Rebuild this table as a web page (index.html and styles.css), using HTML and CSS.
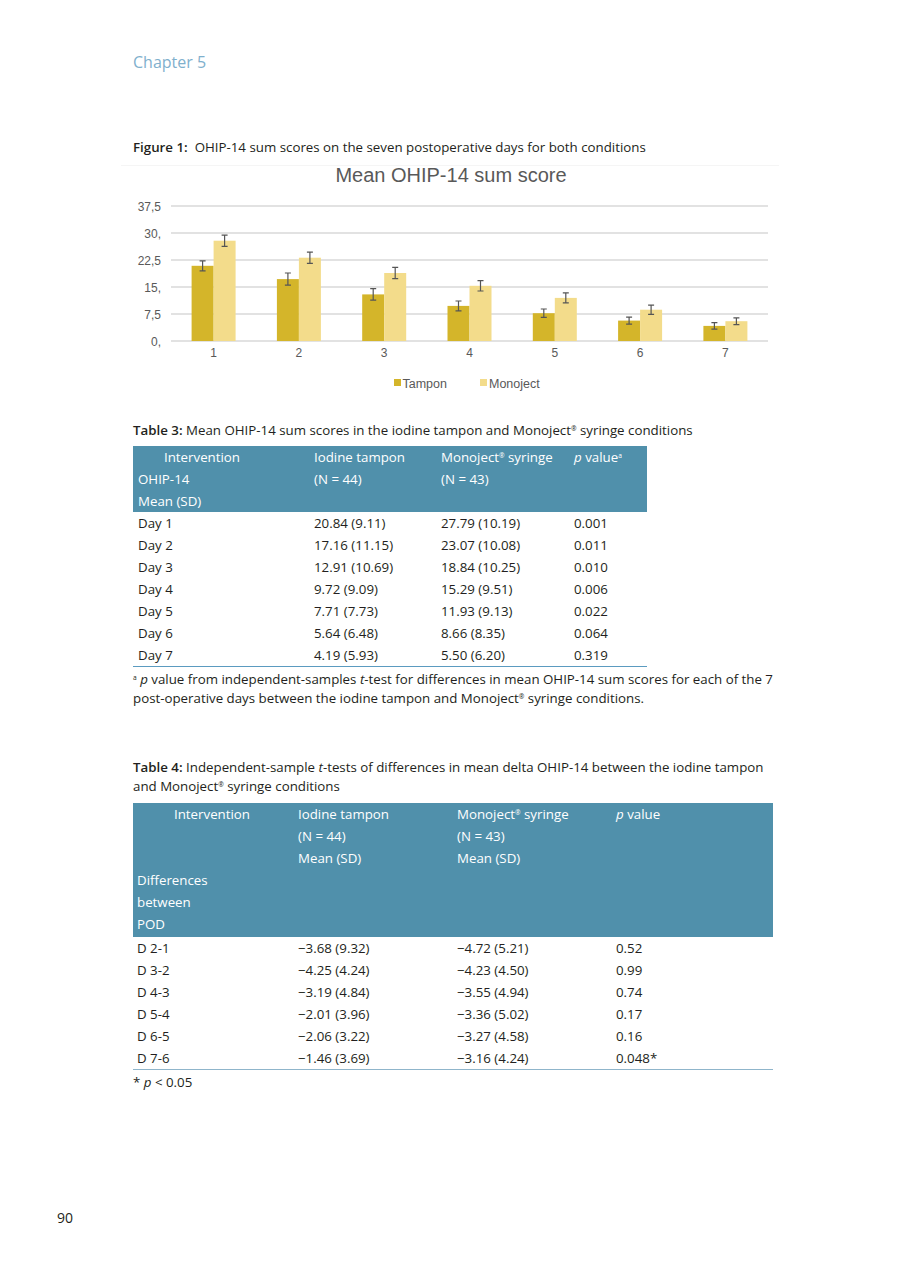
FILE: index.html
```html
<!DOCTYPE html>
<html>
<head>
<meta charset="utf-8">
<link rel="stylesheet" href="styles.css">
</head>
<body>
<div class="content">
  <div class="chapter">Chapter 5</div>
  <div class="fig-caption"><b>Figure 1:</b>&nbsp; OHIP-14 sum scores on the seven postoperative days for both conditions</div>
  <svg class="chart" width="660" height="238" viewBox="120 157 660 238" xmlns="http://www.w3.org/2000/svg">
    <line x1="121" y1="165.5" x2="779" y2="165.5" stroke="#f5f5f5" stroke-width="1"/>
    <text x="451" y="182" text-anchor="middle" class="c-title">Mean OHIP-14 sum score</text>
    <g stroke="#d9d9d9" stroke-width="1.5">
      <line x1="171" y1="206" x2="768" y2="206"/>
      <line x1="171" y1="233" x2="768" y2="233"/>
      <line x1="171" y1="260" x2="768" y2="260"/>
      <line x1="171" y1="287" x2="768" y2="287"/>
      <line x1="171" y1="314" x2="768" y2="314"/>
      <line x1="171" y1="341" x2="768" y2="341"/>
    </g>
    <g class="c-axis" text-anchor="end">
      <text x="161" y="210.5">37,5</text>
      <text x="161" y="237.5">30,</text>
      <text x="161" y="264.5">22,5</text>
      <text x="161" y="291.5">15,</text>
      <text x="161" y="318.5">7,5</text>
      <text x="161" y="345.5">0,</text>
    </g>
    <g fill="#d4b52a">
      <rect x="191.6" y="265.8" width="22" height="75.2"/>
      <rect x="276.9" y="279.1" width="22" height="61.9"/>
      <rect x="362.2" y="294.4" width="22" height="46.6"/>
      <rect x="447.5" y="305.9" width="22" height="35.1"/>
      <rect x="532.8" y="313.2" width="22" height="27.8"/>
      <rect x="618.1" y="320.6" width="22" height="20.4"/>
      <rect x="703.4" y="325.9" width="22" height="15.1"/>
    </g>
    <g fill="#f3dc8b">
      <rect x="213.6" y="240.7" width="22" height="100.3"/>
      <rect x="298.9" y="257.7" width="22" height="83.3"/>
      <rect x="384.2" y="273.0" width="22" height="68.0"/>
      <rect x="469.5" y="285.8" width="22" height="55.2"/>
      <rect x="554.8" y="297.9" width="22" height="43.1"/>
      <rect x="640.1" y="309.7" width="22" height="31.3"/>
      <rect x="725.4" y="321.2" width="22" height="19.8"/>
    </g>
    <g stroke="#555" stroke-width="1.2" fill="none">
      <path d="M202.6 260.8V270.8M199.6 260.8H205.6M199.6 270.8H205.6"/>
      <path d="M287.9 273.0V285.2M284.9 273.0H290.9M284.9 285.2H290.9"/>
      <path d="M373.2 288.6V300.2M370.2 288.6H376.2M370.2 300.2H376.2"/>
      <path d="M458.5 301.0V310.9M455.5 301.0H461.5M455.5 310.9H461.5"/>
      <path d="M543.8 309.0V317.4M540.8 309.0H546.8M540.8 317.4H546.8"/>
      <path d="M629.1 317.1V324.1M626.1 317.1H632.1M626.1 324.1H632.1"/>
      <path d="M714.4 322.7V329.1M711.4 322.7H717.4M711.4 329.1H717.4"/>
      <path d="M224.6 235.1V246.3M221.6 235.1H227.6M221.6 246.3H227.6"/>
      <path d="M309.9 252.2V263.3M306.9 252.2H312.9M306.9 263.3H312.9"/>
      <path d="M395.2 267.4V278.6M392.2 267.4H398.2M392.2 278.6H398.2"/>
      <path d="M480.5 280.6V291.0M477.5 280.6H483.5M477.5 291.0H483.5"/>
      <path d="M565.8 292.9V302.9M562.8 292.9H568.8M562.8 302.9H568.8"/>
      <path d="M651.1 305.1V314.3M648.1 305.1H654.1M648.1 314.3H654.1"/>
      <path d="M736.4 317.8V324.6M733.4 317.8H739.4M733.4 324.6H739.4"/>
    </g>
    <g class="c-axis" text-anchor="middle">
      <text x="213.6" y="357">1</text>
      <text x="298.9" y="357">2</text>
      <text x="384.2" y="357">3</text>
      <text x="469.5" y="357">4</text>
      <text x="554.8" y="357">5</text>
      <text x="640.1" y="357">6</text>
      <text x="725.4" y="357">7</text>
    </g>
    <rect x="394" y="379" width="7" height="7" fill="#d4b52a"/>
    <text x="402.5" y="387.5" class="c-legend">Tampon</text>
    <rect x="480" y="379" width="7" height="7" fill="#f3dc8b"/>
    <text x="489" y="387.5" class="c-legend">Monoject</text>
  </svg>

  <div class="tab-caption"><b>Table 3:</b> Mean OHIP-14 sum scores in the iodine tampon and Monoject<sup>®</sup> syringe conditions</div>
  <table class="tbl t3">
    <thead>
      <tr><th class="ind">Intervention</th><th>Iodine tampon</th><th>Monoject<sup>®</sup> syringe</th><th><i>p</i> value<sup>a</sup></th></tr>
      <tr><th>OHIP-14</th><th>(N = 44)</th><th>(N = 43)</th><th></th></tr>
      <tr><th>Mean (SD)</th><th></th><th></th><th></th></tr>
    </thead>
    <tbody>
      <tr><td>Day 1</td><td>20.84 (9.11)</td><td>27.79 (10.19)</td><td>0.001</td></tr>
      <tr><td>Day 2</td><td>17.16 (11.15)</td><td>23.07 (10.08)</td><td>0.011</td></tr>
      <tr><td>Day 3</td><td>12.91 (10.69)</td><td>18.84 (10.25)</td><td>0.010</td></tr>
      <tr><td>Day 4</td><td>9.72 (9.09)</td><td>15.29 (9.51)</td><td>0.006</td></tr>
      <tr><td>Day 5</td><td>7.71 (7.73)</td><td>11.93 (9.13)</td><td>0.022</td></tr>
      <tr><td>Day 6</td><td>5.64 (6.48)</td><td>8.66 (8.35)</td><td>0.064</td></tr>
      <tr><td>Day 7</td><td>4.19 (5.93)</td><td>5.50 (6.20)</td><td>0.319</td></tr>
    </tbody>
  </table>
  <p class="note n3"><sup>a</sup> <i>p</i> value from independent-samples <i>t</i>-test for differences in mean OHIP-14 sum scores for each of the 7 <span class="nw">post-operative</span> days between the iodine tampon and Monoject<sup>®</sup> syringe conditions.</p>

  <div class="tab-caption t4cap"><b>Table 4:</b> Independent-sample <i>t</i>-tests of differences in mean delta OHIP-14 between the iodine tampon and Monoject<sup>®</sup> syringe conditions</div>
  <table class="tbl t4">
    <thead>
      <tr><th class="ind">Intervention</th><th>Iodine tampon</th><th>Monoject<sup>®</sup> syringe</th><th><i>p</i> value</th></tr>
      <tr><th></th><th>(N = 44)</th><th>(N = 43)</th><th></th></tr>
      <tr><th></th><th>Mean (SD)</th><th>Mean (SD)</th><th></th></tr>
      <tr><th>Differences</th><th></th><th></th><th></th></tr>
      <tr><th>between</th><th></th><th></th><th></th></tr>
      <tr class="last"><th>POD</th><th></th><th></th><th></th></tr>
    </thead>
    <tbody>
      <tr><td>D 2-1</td><td>−3.68 (9.32)</td><td>−4.72 (5.21)</td><td>0.52</td></tr>
      <tr><td>D 3-2</td><td>−4.25 (4.24)</td><td>−4.23 (4.50)</td><td>0.99</td></tr>
      <tr><td>D 4-3</td><td>−3.19 (4.84)</td><td>−3.55 (4.94)</td><td>0.74</td></tr>
      <tr><td>D 5-4</td><td>−2.01 (3.96)</td><td>−3.36 (5.02)</td><td>0.17</td></tr>
      <tr><td>D 6-5</td><td>−2.06 (3.22)</td><td>−3.27 (4.58)</td><td>0.16</td></tr>
      <tr><td>D 7-6</td><td>−1.46 (3.69)</td><td>−3.16 (4.24)</td><td>0.048*</td></tr>
    </tbody>
  </table>
  <p class="note n4">* <i>p</i> &lt; 0.05</p>
</div>
<div class="folio">90</div>
</body>
</html>
```

FILE: styles.css
```css
html, body {
  margin: 0;
  padding: 0;
  background: #ffffff;
}
body {
  font-family: "Open Sans", "Noto Sans", sans-serif;
  font-size: 13.3px;
  color: #231f20;
  width: 905px;
  height: 1280px;
  overflow: hidden;
}
.content {
  margin-left: 133px;
  padding-top: 52px;
  width: 645px;
}
sup {
  font-size: 0.5em;
  line-height: 0;
  vertical-align: 0.65em;
}
b {
  font-weight: 600;
}
.nw {
  white-space: nowrap;
}
.chapter {
  font-size: 16px;
  line-height: 20px;
  color: #7fb0cd;
}
.fig-caption {
  margin-top: 65px;
  line-height: 20px;
}
.chart {
  display: block;
  margin-left: -13px;
}
.c-title {
  font-family: "Liberation Sans", Arial, sans-serif;
  font-size: 20px;
  fill: #595959;
}
.c-axis {
  font-family: "Liberation Sans", Arial, sans-serif;
  font-size: 12px;
  fill: #595959;
}
.c-legend {
  font-family: "Liberation Sans", Arial, sans-serif;
  font-size: 12.5px;
  fill: #595959;
}
.tab-caption {
  margin-top: 25px;
  line-height: 20px;
}
.t4cap {
  margin-top: 50px;
  line-height: 19px;
}
.tbl {
  border-collapse: collapse;
  table-layout: fixed;
}
.tbl th, .tbl td {
  padding: 0 0 0 5px;
  height: 22px;
  line-height: 22px;
  text-align: left;
  font-weight: normal;
  white-space: nowrap;
  vertical-align: middle;
}
.tbl thead th {
  background: #5090ab;
  color: #ffffff;
}
.t3 {
  margin-top: 6px;
  width: 514px;
  border-bottom: 1.5px solid #5b9bc0;
}
.t3 th:nth-child(1) { width: 171px; }
.t3 th:nth-child(2) { width: 122px; }
.t3 th:nth-child(3) { width: 128px; }
.t3 th.ind { padding-left: 31px; width: 145px; }
.t4 {
  margin-top: 7px;
  width: 640px;
  border-bottom: 1.5px solid #8fb5cb;
}
.t4 th, .t4 td { padding-left: 4px; }
.t4 th:nth-child(1) { width: 157px; }
.t4 th:nth-child(2) { width: 155px; }
.t4 th:nth-child(3) { width: 155px; }
.t4 th.ind { padding-left: 41px; width: 120px; }
.t4 tr.last th { height: 22px; padding-bottom: 2px; }
.note {
  margin: 3px 0 0 0;
  line-height: 19px;
  width: 645px;
}
.folio {
  margin-left: 57px;
  margin-top: 116px;
  font-size: 14px;
  line-height: 20px;
}
```
